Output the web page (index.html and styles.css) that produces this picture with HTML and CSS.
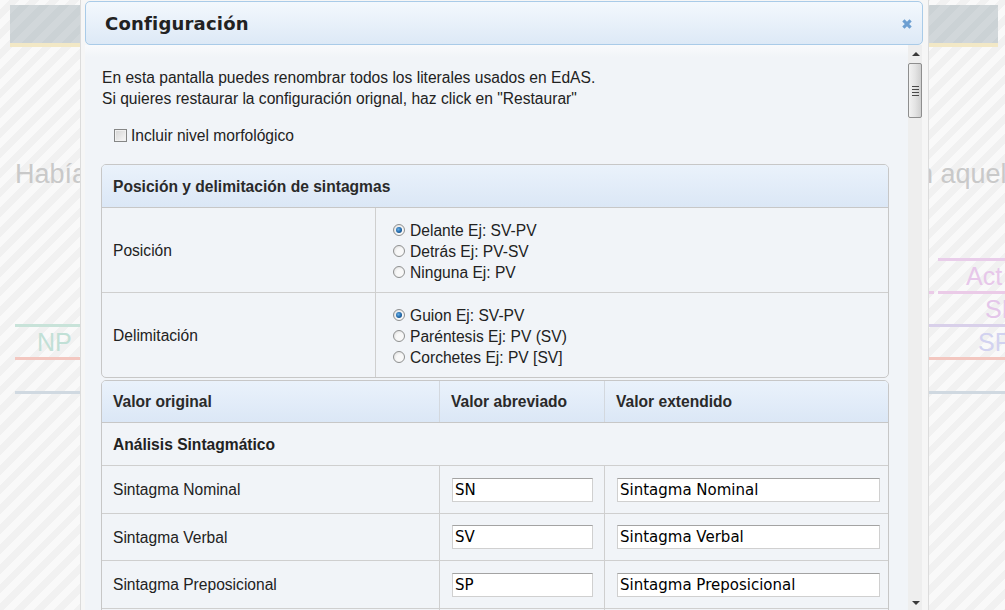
FILE: index.html
```html
<!DOCTYPE html>
<html lang="es">
<head>
<meta charset="utf-8">
<title>Configuración</title>
<link rel="stylesheet" href="styles.css">
</head>
<body>
<div class="page">
  <div class="topbar"></div>
  <div class="sentence"><div class="s-left">Había</div><div class="s-right">en aquel</div></div>
  <div class="tree">
    <div class="tree-left">
      <div class="gap g66"></div>
      <div class="line green"></div>
      <div class="lbl np">NP</div>
      <div class="line red"></div>
      <div class="gap g31"></div>
      <div class="line blue"></div>
    </div>
    <div class="tree-right">
      <div class="line purple inset"></div>
      <div class="lbl act">Act</div>
      <div class="split-line"><span class="dash"></span><span class="line pink"></span></div>
      <div class="lbl sn">SN</div>
      <div class="line lavender"></div>
      <div class="lbl sp">SP</div>
      <div class="line red"></div>
      <div class="gap g31"></div>
      <div class="line blue"></div>
    </div>
  </div>
</div>

<div class="dialog">
  <div class="dlg-header">
    <span class="dlg-title">Configuración</span>
    <svg class="dlg-close" width="10" height="10" viewBox="0 0 10 10"><path d="M1.4 1.4 8.6 8.6M8.6 1.4 1.4 8.6" stroke="#6d9fd1" stroke-width="3.2"/></svg>
  </div>
  <div class="dlg-body">
    <div class="dlg-content">
      <p class="intro">En esta pantalla puedes renombrar todos los literales usados en EdAS.<br>Si quieres restaurar la configuración orignal, haz click en "Restaurar"</p>
      <div class="check-row"><span class="checkbox"></span><span>Incluir nivel morfológico</span></div>

      <div class="panel pos-panel">
        <div class="panel-head">Posición y delimitación de sintagmas</div>
        <div class="opt-row">
          <div class="opt-name">Posición</div>
          <div class="opt-values">
            <div class="radio-row"><span class="radio checked"></span>Delante Ej: SV-PV</div>
            <div class="radio-row"><span class="radio"></span>Detrás Ej: PV-SV</div>
            <div class="radio-row"><span class="radio"></span>Ninguna Ej: PV</div>
          </div>
        </div>
        <div class="opt-row last">
          <div class="opt-name">Delimitación</div>
          <div class="opt-values">
            <div class="radio-row"><span class="radio checked"></span>Guion Ej: SV-PV</div>
            <div class="radio-row"><span class="radio"></span>Paréntesis Ej: PV (SV)</div>
            <div class="radio-row"><span class="radio"></span>Corchetes Ej: PV [SV]</div>
          </div>
        </div>
      </div>

      <div class="panel values-panel">
        <div class="vrow vhead">
          <div class="vcell">Valor original</div>
          <div class="vcell">Valor abreviado</div>
          <div class="vcell">Valor extendido</div>
        </div>
        <div class="vsection">Análisis Sintagmático</div>
        <div class="vrow">
          <div class="vcell">Sintagma Nominal</div>
          <div class="vcell"><input class="vinput short" type="text" value="SN"></div>
          <div class="vcell"><input class="vinput long" type="text" value="Sintagma Nominal"></div>
        </div>
        <div class="vrow r47">
          <div class="vcell">Sintagma Verbal</div>
          <div class="vcell"><input class="vinput short" type="text" value="SV"></div>
          <div class="vcell"><input class="vinput long" type="text" value="Sintagma Verbal"></div>
        </div>
        <div class="vrow">
          <div class="vcell">Sintagma Preposicional</div>
          <div class="vcell"><input class="vinput short" type="text" value="SP"></div>
          <div class="vcell"><input class="vinput long" type="text" value="Sintagma Preposicional"></div>
        </div>
        <div class="vrow empty">
          <div class="vcell"></div>
          <div class="vcell"></div>
          <div class="vcell"></div>
        </div>
      </div>
    </div>
    <div class="scrollbar">
      <div class="sb-btn"><span class="tri up"></span></div>
      <div class="sb-thumb"><span></span><span></span><span></span><span></span></div>
      <div class="sb-track"></div>
      <div class="sb-btn"><span class="tri down"></span></div>
    </div>
  </div>
</div>
</body>
</html>
```

FILE: styles.css
```css
* { box-sizing: border-box; }

html, body {
  margin: 0;
  padding: 0;
}

body {
  width: 1005px;
  height: 610px;
  overflow: hidden;
  position: relative;
  font-family: "Liberation Sans", Arial, sans-serif;
  color: #222;
  background: repeating-linear-gradient(135deg, #f9f9f9 0 7px, #f1f1f1 7px 14px);
}

/* ---------- background page ---------- */
.page {
  width: 1005px;
}

.topbar {
  margin: 5px 7px 0 10px;
  height: 42px;
  background: repeating-linear-gradient(135deg, rgba(255,255,255,0.12) 0 7px, rgba(255,255,255,0) 7px 14px), #cbd2d5;
  border-bottom: 4px solid #f2e8c6;
}

.sentence {
  display: flex;
  justify-content: space-between;
  margin-top: 112px;
  font-size: 27px;
  line-height: 31px;
  color: #c9c9c9;
  white-space: nowrap;
}
.s-left {
  width: 65px;
  margin-left: 15px;
  overflow: hidden;
}
.s-right {
  width: 76px;
  overflow: hidden;
  text-indent: -26px;
}

.tree {
  display: flex;
  justify-content: space-between;
  margin-top: 68px;
}
.tree-left { width: 65px; margin-left: 15px; }
.tree-right { width: 76px; }

.gap.g66 { height: 66px; }
.gap.g31 { height: 31px; }

.line { height: 3px; }
.line.green { background: #c8e3d9; }
.line.red { background: #f3c7c0; }
.line.blue { background: #d0d9e1; }
.line.purple { background: #e9cdea; }
.line.lavender { background: #d9d0ea; }
.line.pink { background: #ebcbe8; flex: 1; }
.line.inset { margin-left: 9px; }

.split-line { display: flex; height: 3px; gap: 4px; }
.split-line .dash { width: 5px; background: #ebcbe8; }

.lbl {
  height: 30px;
  font-size: 25px;
  line-height: 30px;
  white-space: nowrap;
  overflow: hidden;
}
.lbl.np { padding-left: 22px; color: #c1e0d6; }
.lbl.act { padding-left: 37px; color: #e7c7ea; }
.lbl.sn { padding-left: 56px; color: #e4c6ea; }
.lbl.sp { padding-left: 49px; color: #d2d2f0; }

/* ---------- dialog ---------- */
.dialog {
  position: absolute;
  left: 80px;
  top: -3px;
  width: 849px;
  height: 625px;
  padding: 3px 5px 0 4px;
  background: #f6f6f6;
  border: 1px solid #dcdcdc;
  overflow: hidden;
}

.dlg-header {
  height: 44px;
  display: flex;
  align-items: center;
  justify-content: space-between;
  padding: 0 10px 0 19px;
  border: 1px solid #a9cbe8;
  border-radius: 5px;
  background: linear-gradient(#f3f8fd, #dde9f6);
}

.dlg-title {
  font-family: "DejaVu Sans", Verdana, sans-serif;
  font-weight: bold;
  font-size: 18px;
  color: #222;
  letter-spacing: 0.2px;
}

.dlg-close { display: block; margin-top: 1px; }

.dlg-body {
  display: flex;
  height: 566px;
  background: linear-gradient(#f9fafc, #f1f4f8 12px);
}

.dlg-content {
  flex: 1;
  overflow: hidden;
  padding: 22px 19px 0 16px;
  font-size: 15.6px;
  line-height: 21px;
}

.intro {
  margin: 0;
  padding-left: 1px;
}

.check-row {
  display: flex;
  align-items: center;
  gap: 4px;
  margin-top: 16px;
  padding-left: 13px;
  height: 21px;
}

.checkbox {
  width: 13px;
  height: 13px;
  border: 1px solid #858686;
  background: linear-gradient(135deg, #d4d4d4, #f8f8f8);
  box-shadow: inset 0 0 0 1px #f0f0f0;
}

/* panels */
.panel {
  border: 1px solid #c7c7c7;
  border-radius: 5px;
  overflow: hidden;
  background: #f1f4f8;
}

.pos-panel { margin-top: 18px; }
.values-panel { margin-top: 2px; }

.panel-head {
  height: 43px;
  display: flex;
  align-items: center;
  padding-left: 11px;
  font-weight: bold;
  color: #2a2a2a;
  background: linear-gradient(#eaf2fb, #dbe7f6);
  border-bottom: 1px solid #c7c7c7;
}

.opt-row {
  display: flex;
  height: 85px;
  border-bottom: 1px solid #cfcfcf;
}
.opt-row.last { border-bottom: 0; height: 84px; }

.opt-name {
  width: 274px;
  border-right: 1px solid #cfcfcf;
  padding-left: 11px;
  display: flex;
  align-items: center;
}

.opt-values {
  flex: 1;
  padding-left: 17px;
  padding-top: 2px;
  display: flex;
  flex-direction: column;
  justify-content: center;
}

.radio-row {
  display: flex;
  align-items: center;
  gap: 5px;
  height: 21px;
}

.radio {
  position: relative;
  width: 12px;
  height: 12px;
  border-radius: 50%;
  border: 1px solid #8f9090;
  background: radial-gradient(circle at 60% 60%, #f8f8f8 0 40%, #d6d6d6 100%);
}
.radio.checked::after {
  content: "";
  position: absolute;
  left: 2px;
  top: 2px;
  width: 6px;
  height: 6px;
  border-radius: 50%;
  background: radial-gradient(circle at 40% 40%, #6ab0e6 0, #1f66a8 55%, #0e3a66 100%);
}

/* values table */
.vrow {
  display: grid;
  grid-template-columns: 338px 165px 1fr;
  height: 48px;
  border-bottom: 1px solid #cfcfcf;
}
.vrow.r47 { height: 47px; }

.vcell {
  display: flex;
  align-items: center;
  padding-left: 11px;
  border-right: 1px solid #cfcfcf;
}
.vcell:last-child { border-right: 0; }

.vrow.vhead {
  height: 42px;
  font-weight: bold;
  color: #2a2a2a;
  background: linear-gradient(#eaf2fb, #dbe7f6);
  border-bottom-color: #c7c7c7;
}
.vhead .vcell { border-right-color: #d3d8de; }

.vsection {
  height: 43px;
  display: flex;
  align-items: center;
  padding-left: 11px;
  font-weight: bold;
  border-bottom: 1px solid #cfcfcf;
}

.vinput {
  height: 24px;
  margin: 0 0 0 1px;
  padding: 0 2px;
  border: 1px solid #d0d0d0;
  border-top-color: #a3a3a3;
  background: #fff;
  font-family: "DejaVu Sans", Verdana, sans-serif;
  font-size: 15px;
  color: #000;
  outline: none;
}
.vinput.short { width: 141px; }
.vinput.long { width: 263px; }

/* scrollbar */
.scrollbar {
  width: 15px;
  display: flex;
  flex-direction: column;
  background: #eeeeee;
  border-right: 1px solid #f6f6f6;
}

.sb-btn {
  height: 17px;
  display: flex;
  align-items: center;
  justify-content: center;
}

.tri { width: 0; height: 0; border-left: 4px solid transparent; border-right: 4px solid transparent; }
.tri.up { border-bottom: 4px solid #3a3a3a; margin-left: 1px; }
.tri.down { border-top: 4px solid #3a3a3a; margin-left: 1px; }

.sb-thumb {
  height: 55px;
  margin: 1px 0 0 0;
  border: 1px solid #8e8e8e;
  border-radius: 2px;
  background: linear-gradient(90deg, #f2f2f2, #e4e4e4 50%, #cfcfcf);
  display: flex;
  flex-direction: column;
  align-items: center;
  justify-content: center;
  gap: 2px;
}
.sb-thumb span {
  width: 7px;
  height: 1px;
  background: #4a4a4a;
  margin-left: 1px;
}

.sb-track { flex: 1; }
```
